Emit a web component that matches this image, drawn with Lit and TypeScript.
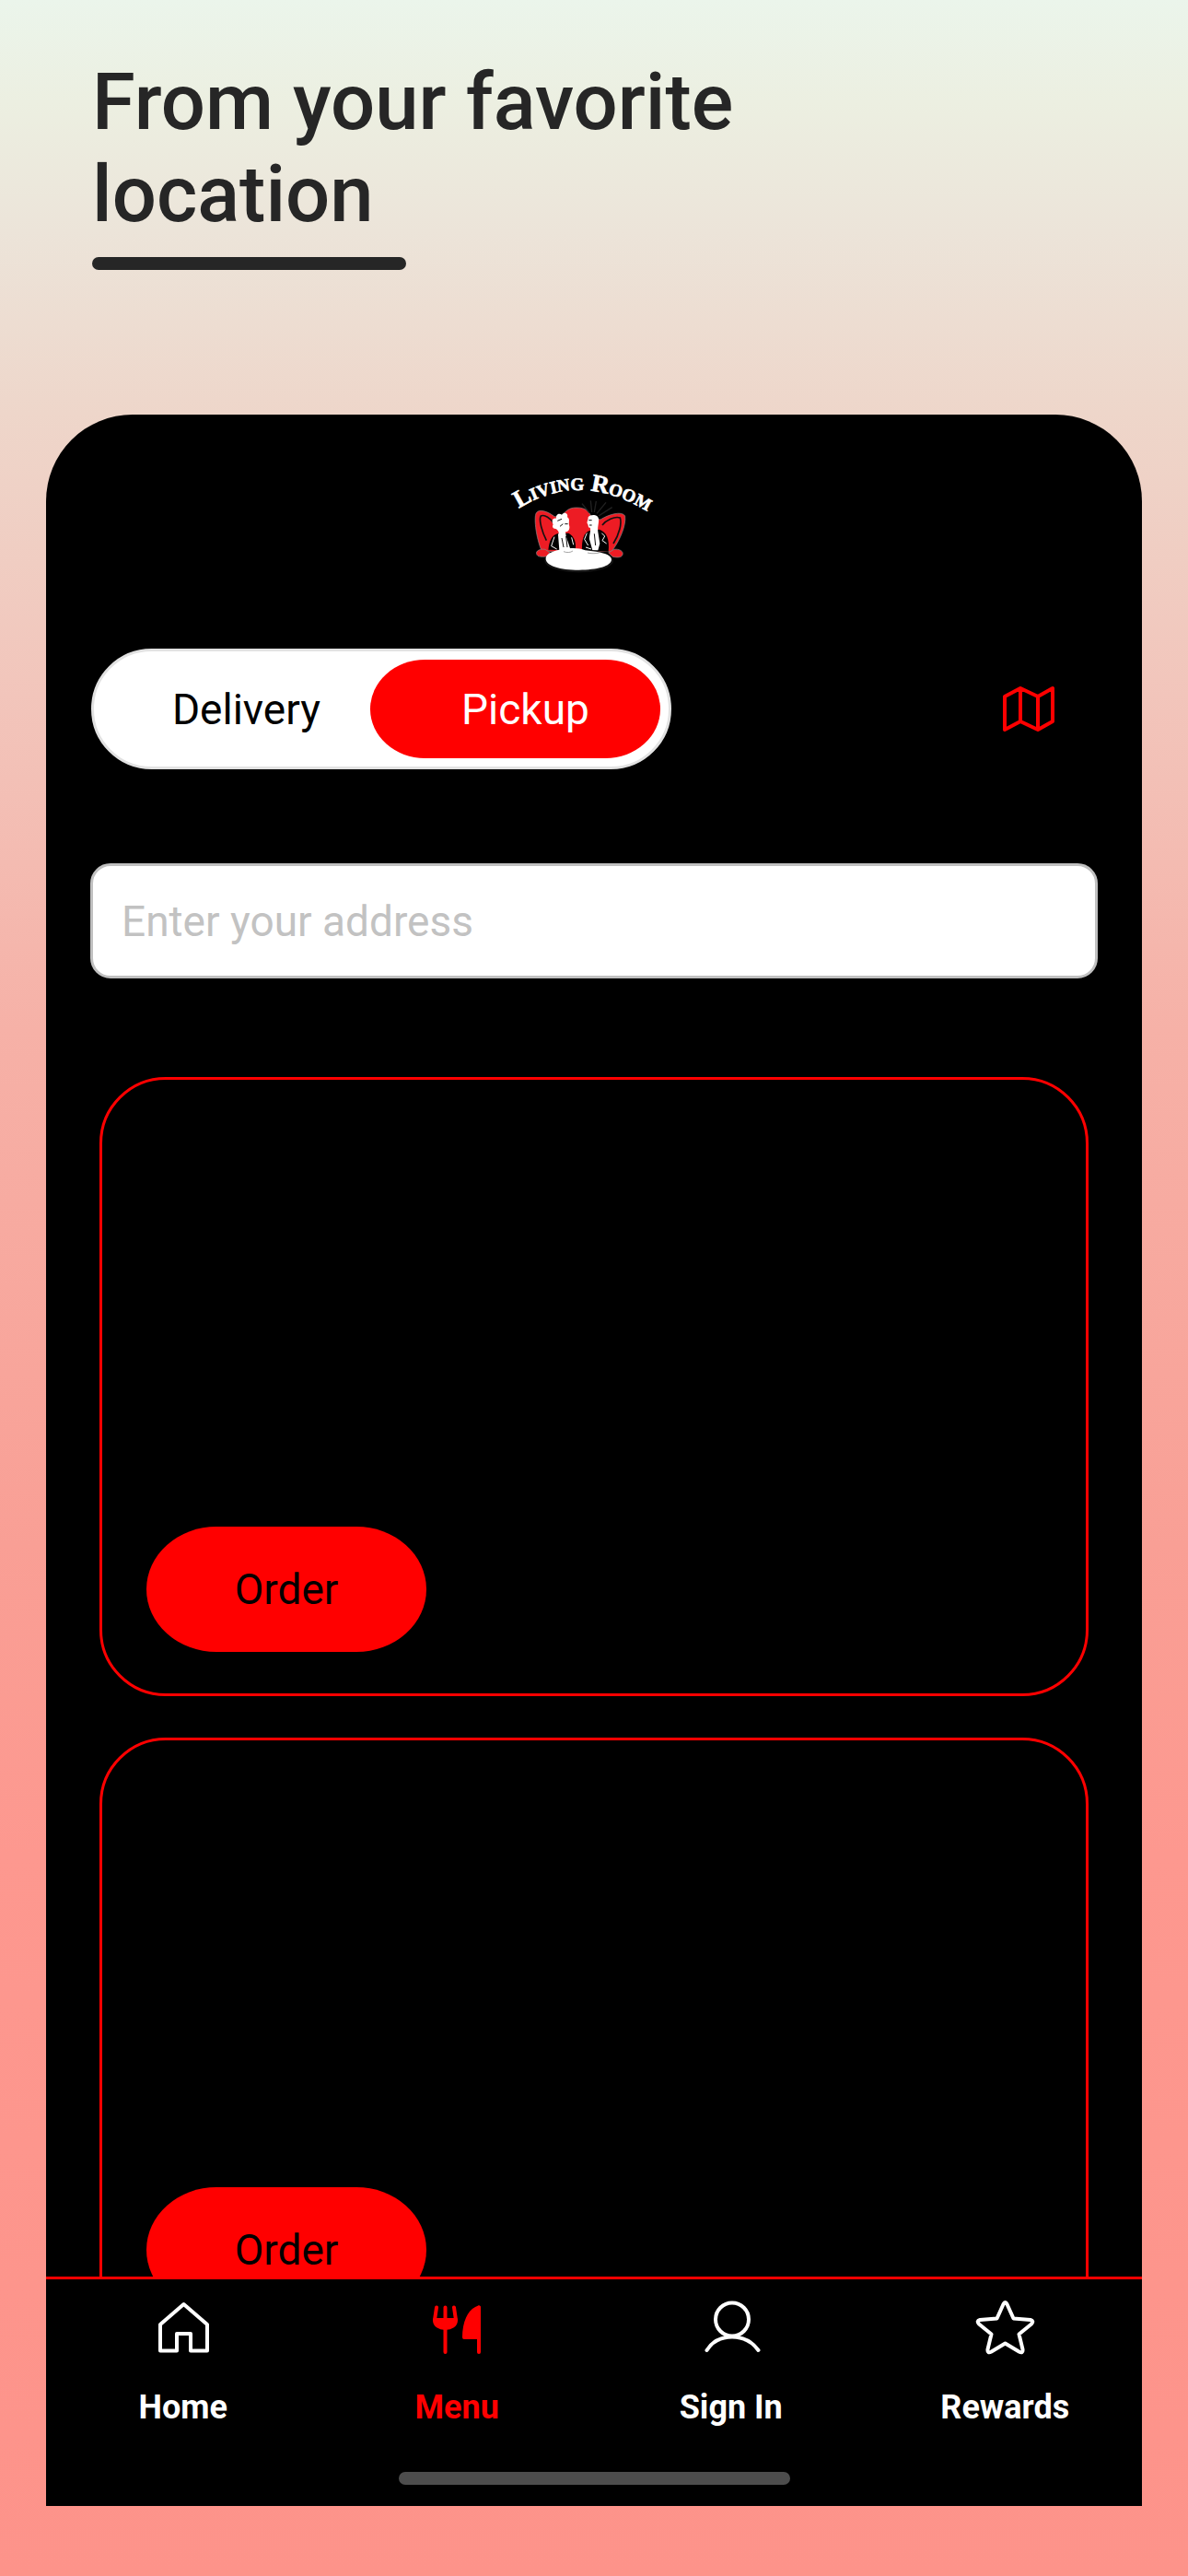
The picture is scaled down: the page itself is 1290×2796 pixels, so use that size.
import {LitElement, css, html, svg} from 'lit';
import {customElement, property, state} from 'lit/decorators.js';
import {classMap} from 'lit/directives/class-map.js';

// tab bar icons, drawn on a 66 x 66 grid
const icons: Record<string, unknown> = {
  home: svg`
    <path d="M8 29 L33.5 7 L59 29 V57.5 H41 V39 H26 V57.5 H8 Z" />`,
  menu: svg`
    <path d="M11 10.5 L9 24 M20.5 10.5 V59 M30 10.5 L32 24" />
    <path class="solid" d="M9 24 H32 C32 30 27 33 20.5 33 C14 33 9 30 9 24 Z" />
    <path class="solid" d="M57 10.5 V43 H41 C41 28 46 14 57 10.5 Z" />
    <path d="M57 10.5 V59" />`,
  user: svg`
    <circle cx="34" cy="23.5" r="18" />
    <path d="M6.5 57 C12 48 22 42.5 34 42.5 C46 42.5 56 48 62.5 57" />`,
  star: svg`
    <path
      d="M31.5 7 Q33.5 3 35.5 7 L42.5 22.5 L61 24 Q65 25 62 28.5 L48.5 39.5
        L52.5 56 Q53 61 48.5 58.5 L33.5 49.5 L18.5 58.5 Q14 61 14.5 56
        L18.5 39.5 L5 28.5 Q2 25 6 24 L24.5 22.5 Z"
    />`,
};

// logo of the restaurant, shown at the top of the screen
@customElement('brand-logo')
export class BrandLogo extends LitElement {
  static override styles = css`
    :host {
      display: block;
    }
    svg {
      display: block;
      width: 200px;
      height: 150px;
    }
    .name {
      font-family: 'Liberation Serif', serif;
      font-size: 80px;
      font-variant: small-caps;
      font-weight: bold;
      fill: #fff;
      stroke: #fff;
      stroke-width: 2;
    }
  `;

  override render() {
    return html`
      <svg viewBox="0 0 600 450" role="img" aria-label="Living Room">
        <defs>
          <path id="arc" d="M100 186 Q300 58 530 202" />
        </defs>
        <text class="name">
          <textPath href="#arc">Living Room</textPath>
        </text>
        <!-- armchairs -->
        <g fill="#ed1c24" stroke="#8a8a8a" stroke-width="2">
          <path d="M172 318 C154 270 150 215 156 202 C164 184 196 196 216 212 L240 212 C256 184 276 183 290 183 C316 183 330 194 336 214 L366 222 C390 206 436 192 446 210 C450 240 430 290 402 326 L200 326 Z" />
          <path d="M158 334 C154 324 170 316 186 319 L202 330 L190 342 C176 344 160 344 158 334 Z" />
          <path d="M438 336 C442 326 428 316 410 319 L392 330 L406 343 C420 346 436 346 438 336 Z" />
        </g>
        <g fill="none" stroke="#111" stroke-width="5">
          <path d="M190 290 C176 262 164 222 172 210 C184 204 204 218 212 232" />
          <path d="M408 300 C428 268 436 234 430 216 C412 210 384 224 372 240" />
        </g>
        <!-- spiked hair -->
        <path
          fill="none"
          stroke="#222"
          stroke-width="4"
          d="M330 200 L306 170 M338 198 L334 160 M346 198 L352 162 M354 202 L384 166 M360 210 L404 182"
        />
        <!-- guest on the left -->
        <path fill="#000" d="M196 320 C200 290 206 272 230 266 L262 266 C282 276 288 300 284 322 Z" />
        <path
          fill="#fff"
          d="M212 238 C206 226 210 216 222 218 C220 204 232 200 240 206 C250 194 262 204 258 214 C268 220 262 230 264 240 C268 252 262 262 252 262 L254 276 L268 318 L232 322 L228 270 C234 264 226 254 220 252 C210 252 208 244 212 238 Z"
        />
        <path fill="none" stroke="#111" stroke-width="3" d="M226 226 L240 220 M234 244 L244 236 M250 236 H260 M240 282 L246 312 M254 276 L258 312" />
        <path fill="none" stroke="#fff" stroke-width="3" d="M216 278 L206 308 L224 318 M272 280 L278 304" />
        <!-- guest on the right -->
        <path fill="#000" d="M306 322 C304 290 312 262 332 258 L362 254 C386 262 396 284 392 326 Z" />
        <path
          fill="#fff"
          d="M326 214 C334 204 358 204 360 220 C362 232 356 244 358 262 L364 300 L358 322 L340 322 L330 286 C330 268 336 256 332 248 C324 248 328 240 324 236 C320 230 326 226 326 214 Z"
        />
        <path fill="none" stroke="#111" stroke-width="3" d="M328 224 H338 M330 240 H338 M346 268 L350 306" />
        <path fill="none" stroke="#fff" stroke-width="3" d="M322 266 L314 286 L326 306 M370 266 L380 276 L372 290 L386 300 M318 312 L336 318" />
        <!-- table -->
        <ellipse cx="296" cy="356" rx="112" ry="38" fill="#151515" />
        <path
          fill="#fff"
          d="M188 350 C188 328 232 318 262 316 C284 314 300 316 316 322 L352 326 C386 332 402 340 402 352 C402 374 354 386 296 386 C236 386 188 372 188 350 Z"
        />
        <path fill="none" stroke="#777" stroke-width="2" d="M246 326 C256 330 268 330 276 324 M324 330 C340 334 358 332 366 328" />
      </svg>
    `;
  }
}

// card of one restaurant location
@customElement('location-card')
export class LocationCard extends LitElement {
  static override styles = css`
    :host {
      display: flex;
      align-items: flex-end;
      flex: none;
      box-sizing: border-box;
      height: 672px;
      padding: 45px 48px;
      border: 3px solid #f00;
      border-radius: 72px;
    }
    button {
      width: 304px;
      height: 136px;
      padding: 0;
      border: none;
      border-radius: 76px / 68px;
      background: #f00;
      color: #000;
      font-family: Roboto, sans-serif;
      font-size: 46px;
    }
  `;

  override render() {
    return html`<button type="button">Order</button>`;
  }
}

// one entry of the bottom tab bar
@customElement('tab-item')
export class TabItem extends LitElement {
  static override styles = css`
    :host {
      display: block;
      flex: 1;
    }
    a {
      display: flex;
      flex-direction: column;
      align-items: center;
      gap: 33px;
      color: #fff;
      font-family: Roboto, sans-serif;
      font-size: 36px;
      font-weight: 700;
      line-height: 40px;
      text-decoration: none;
    }
    :host([active]) a {
      color: #f00;
    }
    svg {
      width: 66px;
      height: 66px;
      fill: none;
      stroke: currentColor;
      stroke-width: 4;
      stroke-linecap: round;
      stroke-linejoin: round;
    }
    .solid {
      fill: currentColor;
    }
  `;

  @property()
  label = '';

  @property()
  icon = 'home';

  override render() {
    return html`
      <a href="#${this.icon}">
        <svg viewBox="0 0 66 66" aria-hidden="true">${icons[this.icon]}</svg>
        <span>${this.label}</span>
      </a>
    `;
  }
}

@customElement('app-root')
export class AppRoot extends LitElement {
  static override styles = css`
    :host {
      display: flex;
      flex-direction: column;
      box-sizing: border-box;
      height: 100vh;
      padding: 0 50px 76px;
      background: linear-gradient(
        #ebf5eb,
        #ecefe1 4%,
        #ece4d9 9%,
        #eed6ca 16%,
        #f2c5bb 27%,
        #f6b1a7 40%,
        #f99f95 60%,
        #fd988f 72%,
        #fd938a
      );
      font-family: Roboto, sans-serif;
    }
    .intro {
      box-sizing: border-box;
      flex: none;
      height: 450px;
      padding: 61px 50px 0;
    }
    h1 {
      max-width: 800px;
      margin: 0;
      color: #262626;
      font-size: 85px;
      font-weight: 500;
      line-height: 100px;
    }
    .rule {
      width: 341px;
      height: 14px;
      margin-top: 18px;
      border-radius: 7px;
      background: #262626;
    }
    .screen {
      display: flex;
      flex-direction: column;
      flex: 1;
      min-height: 0;
      overflow: hidden;
      border-radius: 94px 94px 0 0;
      background: #000;
    }
    .logo-row {
      display: flex;
      justify-content: center;
      padding: 40px 30px 64px 0;
    }
    .mode-row {
      display: flex;
      align-items: center;
      justify-content: space-between;
      padding: 0 93px 0 49px;
    }
    .switch {
      display: grid;
      grid-template-columns: 12fr 13fr;
      box-sizing: border-box;
      width: 630px;
      height: 131px;
      padding: 9px;
      border: 3px solid #e2e2e2;
      border-radius: 66px;
      background: #fff;
    }
    .switch button {
      padding: 0 0 0 22px;
      border: none;
      border-radius: 60px / 54px;
      background: none;
      color: #000;
      font-family: inherit;
      font-size: 46px;
    }
    .switch .selected {
      background: #f00;
      color: #fff;
    }
    .map {
      padding: 0;
      border: none;
      background: none;
    }
    .map svg {
      display: block;
      width: 60px;
      height: 60px;
      fill: none;
      stroke: #f00;
      stroke-width: 4;
      stroke-linejoin: round;
    }
    .address {
      box-sizing: border-box;
      flex: none;
      height: 125px;
      margin: 102px 48px 107px;
      padding: 0 31px;
      border: 3px solid #c0c0c0;
      border-radius: 22px;
      background: #fff;
      color: #000;
      font-family: inherit;
      font-size: 46px;
    }
    .address::placeholder {
      color: #c2c2c2;
    }
    .list {
      display: flex;
      flex-direction: column;
      flex: 1;
      gap: 45px;
      min-height: 0;
      padding: 0 58px;
      overflow: hidden;
    }
    nav {
      display: flex;
      padding-top: 20px;
      border-top: 3px solid #f00;
    }
    .handle {
      align-self: center;
      flex: none;
      width: 425px;
      height: 14px;
      margin: 50px 0 23px;
      border-radius: 7px;
      background: #4d4d4d;
    }
  `;

  // 'delivery' or 'pickup'
  @state()
  mode = 'pickup';

  _modeButton(mode: string, label: string) {
    return html`
      <button
        type="button"
        class=${classMap({selected: this.mode === mode})}
        aria-pressed=${this.mode === mode}
        @click=${() => (this.mode = mode)}
      >
        ${label}
      </button>
    `;
  }

  override render() {
    return html`
      <header class="intro">
        <h1>From your favorite location</h1>
        <div class="rule"></div>
      </header>
      <main class="screen">
        <div class="logo-row"><brand-logo></brand-logo></div>
        <div class="mode-row">
          <div class="switch">
            ${this._modeButton('delivery', 'Delivery')}
            ${this._modeButton('pickup', 'Pickup')}
          </div>
          <button class="map" type="button" aria-label="Map">
            <svg viewBox="0 0 60 60">
              <path d="M4 16 L21 7 L40 16 L56 7 V43 L40 52 L21 43 L4 52 Z M21 7 V43 M40 16 V52" />
            </svg>
          </button>
        </div>
        <input
          class="address"
          type="text"
          aria-label="Enter your address"
          placeholder="Enter your address"
        />
        <div class="list">
          <location-card></location-card>
          <location-card></location-card>
        </div>
        <nav>
          <tab-item icon="home" label="Home"></tab-item>
          <tab-item icon="menu" label="Menu" active></tab-item>
          <tab-item icon="user" label="Sign In"></tab-item>
          <tab-item icon="star" label="Rewards"></tab-item>
        </nav>
        <div class="handle"></div>
      </main>
    `;
  }
}

declare global {
  interface HTMLElementTagNameMap {
    'brand-logo': BrandLogo;
    'location-card': LocationCard;
    'tab-item': TabItem;
    'app-root': AppRoot;
  }
}
